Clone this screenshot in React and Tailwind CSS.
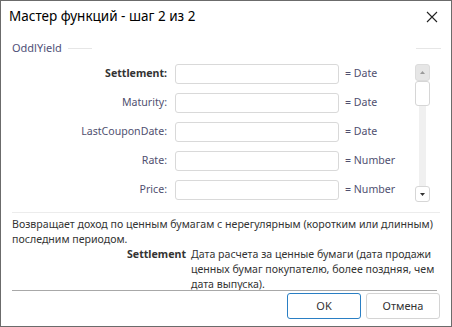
import React from 'react';

const rows = [
  { label: 'Settlement:', type: '= Date', bold: true },
  { label: 'Maturity:', type: '= Date' },
  { label: 'LastCouponDate:', type: '= Date' },
  { label: 'Rate:', type: '= Number' },
  { label: 'Price:', type: '= Number' },
];

export default function App() {
  return (
    <div className="w-[452px] h-[327px] bg-white border border-[#6b6b6b] flex flex-col font-['Noto_Sans',sans-serif] text-[10.6px] text-[#3a3a4a] overflow-hidden">
      {/* Title bar */}
      <div className="h-[30px] shrink-0 flex items-center justify-between pl-[8px] pr-[13px]">
        <span className="text-[13.5px] text-black">Мастер функций - шаг 2 из 2</span>
        <svg width="12" height="12" viewBox="0 0 12 12" className="mt-[1px]">
          <path d="M1 1 L11 11 M11 1 L1 11" stroke="#222" strokeWidth="1.1" />
        </svg>
      </div>

      {/* Group header */}
      <div className="h-[16px] shrink-0 mt-[9px] flex items-center pl-[11px] pr-[10px]">
        <span className="text-[#505078] text-[11px]">OddlYield</span>
        <div className="ml-[6px] w-[24px] h-px bg-[#e6e6e6]" />
        <div className="flex-1" />
        <div className="w-[25px] h-px bg-[#e6e6e6]" />
      </div>

      {/* Arguments */}
      <div className="flex shrink-0 mt-[8px] h-[138px]">
        <div className="flex flex-col gap-[9px] w-[402px]">
          {rows.map((r) => (
            <div key={r.label} className="flex items-center h-[20px] whitespace-nowrap">
              <div className={`w-[166px] text-right ${r.bold ? 'font-bold text-[#333]' : 'text-[#505070]'}`}>
                {r.label}
              </div>
              <div className="ml-[8px] w-[164px] h-[20px] border border-[#d9d9d9] rounded-[3px] bg-white shrink-0" />
              <div className="ml-[6px] text-[#505070]">{r.type}</div>
            </div>
          ))}
        </div>
        {/* Scrollbar */}
        <div className="ml-[12px] w-[15px] flex flex-col items-center">
          <div className="w-[15px] h-[17px] bg-[#e6e6e6] rounded-[3px] border border-[#dcdcdc] flex items-center justify-center">
            <svg width="5" height="3" viewBox="0 0 5 3"><path d="M0 3 L2.5 0 L5 3 Z" fill="#9a9a9a" /></svg>
          </div>
          <div className="w-[15px] h-[25px] bg-white rounded-[3px] border border-[#d6d6d6]" />
          <div className="w-[7px] flex-1 bg-[#f0f0f0]" />
          <div className="w-[15px] h-[16px] bg-white rounded-[3px] border border-[#d6d6d6] flex items-center justify-center">
            <svg width="5" height="3" viewBox="0 0 5 3"><path d="M0 0 L2.5 3 L5 0 Z" fill="#333" /></svg>
          </div>
        </div>
      </div>

      {/* Separator */}
      <div className="mx-[11px] shrink-0 mt-[10px] h-px bg-[#ececec]" />

      {/* Description */}
      <div className="px-[11px] shrink-0 pt-[4px] leading-[15px] text-[#333]">
        Возвращает доход по ценным бумагам с нерегулярным (коротким или длинным) последним периодом.
      </div>
      <div className="flex shrink-0 pl-[126px] pr-[10px] leading-[15px] text-[#333]">
        <span className="font-bold shrink-0">Settlement</span>
        <span className="ml-[5px]">Дата расчета за ценные бумаги (дата продажи ценных бумаг покупателю, более поздняя, чем дата выпуска).</span>
      </div>

      {/* Footer line */}
      <div className="ml-[11px] mr-[14px] shrink-0 -mt-[2px] h-px bg-[#a8a8a8]" />

      {/* Buttons */}
      <div className="flex shrink-0 justify-end gap-[5px] pr-[11px] pt-[2px]">
        <button className="w-[74px] h-[26px] border border-[#2a7fc4] rounded-[3px] bg-white text-[11px] text-[#333]">OK</button>
        <button className="w-[74px] h-[26px] border border-[#d4d4d4] rounded-[3px] bg-white text-[11px] text-[#333]">Отмена</button>
      </div>
    </div>
  );
}
